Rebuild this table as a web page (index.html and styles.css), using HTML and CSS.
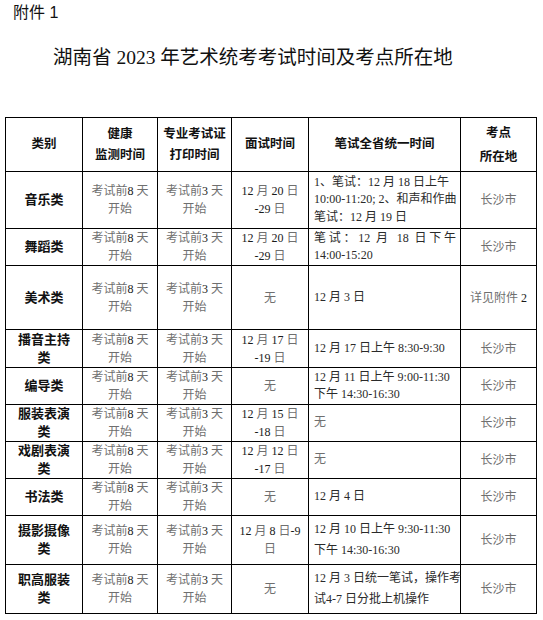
FILE: index.html
```html
<!DOCTYPE html>
<html lang="zh-CN">
<head>
<meta charset="utf-8">
<title>湖南省2023年艺术统考考试时间及考点所在地</title>
<link rel="stylesheet" href="styles.css">
</head>
<body>
<div class="page">
  <div class="annex">附件 1</div>
  <h1 class="title">湖南省 2023 年艺术统考考试时间及考点所在地</h1>
  <table class="grid">
    <colgroup>
      <col class="c1"><col class="c2"><col class="c3"><col class="c4"><col class="c5"><col class="c6">
    </colgroup>
    <thead>
      <tr class="hr">
        <th>类别</th>
        <th>健康<br>监测时间</th>
        <th>专业考试证<br>打印时间</th>
        <th>面试时间</th>
        <th>笔试全省统一时间</th>
        <th class="loose">考点<br>所在地</th>
      </tr>
    </thead>
    <tbody>
      <tr class="h57">
        <td class="cat">音乐类</td>
        <td class="g">考试前<span class="n">8</span> 天<br>开始</td>
        <td class="g">考试前<span class="n">3</span> 天<br>开始</td>
        <td class="g"><span class="n">12</span> 月 <span class="n">20</span> 日<br><span class="n">-29</span> 日</td>
        <td class="w">1、笔试：12 月 18 日上午<br>10:00-11:20; 2、和声和作曲<br>笔试：12 月 19 日</td>
        <td class="g">长沙市</td>
      </tr>
      <tr class="h37">
        <td class="cat">舞蹈类</td>
        <td class="g">考试前<span class="n">8</span> 天<br>开始</td>
        <td class="g">考试前<span class="n">3</span> 天<br>开始</td>
        <td class="g"><span class="n">12</span> 月 <span class="n">20</span> 日<br><span class="n">-29</span> 日</td>
        <td class="w"><span class="jl">笔试：12 月 18 日下午</span>14:00-15:20</td>
        <td class="g">长沙市</td>
      </tr>
      <tr class="h64">
        <td class="cat">美术类</td>
        <td class="g">考试前<span class="n">8</span> 天<br>开始</td>
        <td class="g">考试前<span class="n">3</span> 天<br>开始</td>
        <td class="g">无</td>
        <td class="w">12 月 3 日</td>
        <td class="g">详见附件 <span class="n">2</span></td>
      </tr>
      <tr class="h38">
        <td class="cat"><span class="jl">播音主持</span>类</td>
        <td class="g">考试前<span class="n">8</span> 天<br>开始</td>
        <td class="g">考试前<span class="n">3</span> 天<br>开始</td>
        <td class="g"><span class="n">12</span> 月 <span class="n">17</span> 日<br><span class="n">-19</span> 日</td>
        <td class="w">12 月 17 日上午 8:30-9:30</td>
        <td class="g">长沙市</td>
      </tr>
      <tr class="h36">
        <td class="cat">编导类</td>
        <td class="g">考试前<span class="n">8</span> 天<br>开始</td>
        <td class="g">考试前<span class="n">3</span> 天<br>开始</td>
        <td class="g">无</td>
        <td class="w">12 月 11 日上午 9:00-11:30<br>下午 14:30-16:30</td>
        <td class="g">长沙市</td>
      </tr>
      <tr class="h37">
        <td class="cat"><span class="jl">服装表演</span>类</td>
        <td class="g">考试前<span class="n">8</span> 天<br>开始</td>
        <td class="g">考试前<span class="n">3</span> 天<br>开始</td>
        <td class="g"><span class="n">12</span> 月 <span class="n">15</span> 日<br><span class="n">-18</span> 日</td>
        <td class="w g">无</td>
        <td class="g">长沙市</td>
      </tr>
      <tr class="h37">
        <td class="cat"><span class="jl">戏剧表演</span>类</td>
        <td class="g">考试前<span class="n">8</span> 天<br>开始</td>
        <td class="g">考试前<span class="n">3</span> 天<br>开始</td>
        <td class="g"><span class="n">12</span> 月 <span class="n">12</span> 日<br><span class="n">-17</span> 日</td>
        <td class="w g">无</td>
        <td class="g">长沙市</td>
      </tr>
      <tr class="h37">
        <td class="cat">书法类</td>
        <td class="g">考试前<span class="n">8</span> 天<br>开始</td>
        <td class="g">考试前<span class="n">3</span> 天<br>开始</td>
        <td class="g">无</td>
        <td class="w">12 月 4 日</td>
        <td class="g">长沙市</td>
      </tr>
      <tr class="h49">
        <td class="cat"><span class="jl">摄影摄像</span>类</td>
        <td class="g">考试前<span class="n">8</span> 天<br>开始</td>
        <td class="g">考试前<span class="n">3</span> 天<br>开始</td>
        <td class="g"><span class="n">12</span> 月 <span class="n">8</span> 日<span class="n">-9</span><br>日</td>
        <td class="w wide">12 月 10 日上午 9:30-11:30<br>下午 14:30-16:30</td>
        <td class="g">长沙市</td>
      </tr>
      <tr class="h49">
        <td class="cat"><span class="jl">职高服装</span>类</td>
        <td class="g">考试前<span class="n">8</span> 天<br>开始</td>
        <td class="g">考试前<span class="n">3</span> 天<br>开始</td>
        <td class="g">无</td>
        <td class="w wide">12 月 3 日统一笔试，操作考<br>试4-7 日分批上机操作</td>
        <td class="g">长沙市</td>
      </tr>
    </tbody>
  </table>
</div>
</body>
</html>
```
FILE: styles.css
```css
html, body {
  margin: 0;
  padding: 0;
  background: #ffffff;
}

.page {
  padding: 2px 0 0 5px;
  font-family: "Liberation Serif", "Noto Sans CJK SC", serif;
  color: #111;
}

.annex {
  font-family: "Liberation Sans", "Noto Sans CJK SC", sans-serif;
  font-size: 16px;
  line-height: 22px;
  padding-left: 8px;
  color: #111;
}

.title {
  margin: 19px 0 44px 0;
  padding-left: 48px;
  font-size: 19.5px;
  line-height: 30px;
  font-weight: normal;
  color: #111;
}

.grid {
  border-collapse: collapse;
  table-layout: fixed;
  width: 531px;
}

.c1 { width: 77px; }
.c2 { width: 75px; }
.c3 { width: 74px; }
.c4 { width: 77px; }
.c5 { width: 152px; }
.c6 { width: 76px; }

.grid th,
.grid td {
  border: 1px solid #000;
  padding: 0 4px;
  text-align: center;
  vertical-align: middle;
  font-size: 12px;
  line-height: 18px;
  font-weight: normal;
  color: #222;
}

.grid th {
  font-size: 12.5px;
  font-weight: bold;
  line-height: 21px;
  color: #111;
}

.grid th.loose {
  line-height: 24px;
}

.hr { height: 54px; }
.h57 { height: 57px; }
.h37 { height: 37px; }
.h64 { height: 64px; }
.h38 { height: 38px; }
.h36 { height: 36px; }
.h49 { height: 49px; }

.grid td.cat {
  font-size: 13px;
  font-weight: bold;
  color: #111;
  padding: 0 12px;
}

.jl {
  display: block;
  text-align: justify;
  text-align-last: justify;
}

.grid td.g {
  color: #6f6f6f;
}

.n {
  color: #1a1a1a;
}

.grid td.w {
  text-align: left;
  padding: 0 4px 0 5px;
  line-height: 17.5px;
  white-space: nowrap;
  color: #2a2a2a;
}

.grid td.w.g {
  color: #6f6f6f;
}

.grid td.wide {
  line-height: 21px;
}
```
